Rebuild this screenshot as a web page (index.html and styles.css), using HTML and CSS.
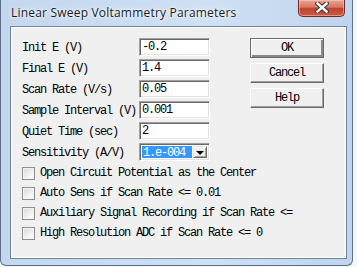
FILE: index.html
```html
<!DOCTYPE html>
<html lang="en">
<head>
  <meta charset="UTF-8">
  <title>Linear Sweep Voltammetry Parameters</title>
  <link rel="stylesheet" href="styles.css">
</head>
<body>
  <div class="window">
    <div class="titlebar">
      <span class="title">Linear Sweep Voltammetry Parameters</span>
      <button class="close" type="button">
        <svg width="14" height="11" viewBox="0 0 14 11">
          <path d="M2.5 1.5 L11.5 9.5 M11.5 1.5 L2.5 9.5" stroke="#3c3c3c" stroke-width="4.6" stroke-linecap="square"/>
          <path d="M2.5 1.5 L11.5 9.5 M11.5 1.5 L2.5 9.5" stroke="#fff" stroke-width="2.4" stroke-linecap="square"/>
        </svg>
      </button>
    </div>
    <div class="client">
      <div class="top">
        <div class="fields">
          <label>Init E (V)</label>
          <input class="edit" type="text" value="-0.2">
          <label>Final E (V)</label>
          <input class="edit" type="text" value="1.4">
          <label>Scan Rate (V/s)</label>
          <input class="edit" type="text" value="0.05">
          <label>Sample Interval (V)</label>
          <input class="edit" type="text" value="0.001">
          <label>Quiet Time (sec)</label>
          <input class="edit" type="text" value="2">
          <label>Sensitivity (A/V)</label>
          <div class="combo">
            <span class="combo-value">1.e-004</span>
            <span class="combo-btn"><span class="arrow"></span></span>
          </div>
        </div>
        <div class="buttons">
          <button class="btn default" type="button">OK</button>
          <button class="btn" type="button">Cancel</button>
          <button class="btn" type="button">Help</button>
        </div>
      </div>
      <div class="checks">
        <div class="check"><span class="box"></span>Open Circuit Potential as the Center</div>
        <div class="check"><span class="box"></span>Auto Sens if Scan Rate &lt;= 0.01</div>
        <div class="check"><span class="box"></span>Auxiliary Signal Recording if Scan Rate &lt;=</div>
        <div class="check"><span class="box"></span>High Resolution ADC if Scan Rate &lt;= 0</div>
      </div>
    </div>
  </div>
</body>
</html>
```

FILE: styles.css
```css
body {
  margin: 0;
  background: #f4f6f9;
  font-family: "Liberation Mono", monospace;
  font-size: 12px;
  letter-spacing: -1.2px;
  color: #000;
}
.window {
  box-sizing: border-box;
  width: 353px;
  height: 266px;
  padding: 0 5px 0 9px;
  border: 1px solid #5d6f86;
  border-top: none;
  border-radius: 0 0 6px 6px;
  background: linear-gradient(90deg, #c3d7ee, #cfe0f4 60%, #bfd5ee);
}
.titlebar {
  display: flex;
  height: 26px;
}
.title {
  padding-left: 1px;
  line-height: 26px;
  font-family: "Open Sans", sans-serif;
  font-size: 12px;
  letter-spacing: 0.2px;
  color: #1b1b1b;
  text-shadow: 0 0 6px #fff, 0 0 3px #fff;
}
.close {
  display: flex;
  align-items: center;
  justify-content: center;
  width: 47px;
  height: 17px;
  margin-left: auto;
  margin-right: 2px;
  padding: 0 0 1px 1px;
  border: 1px solid #6e2a20;
  border-top: none;
  border-radius: 0 0 5px 5px;
  background: linear-gradient(#e9a696, #d77662 45%, #c2422d 52%, #cb5a44);
  box-shadow: inset 0 0 0 1px rgba(255, 210, 200, 0.5);
}
.client {
  box-sizing: border-box;
  height: 233px;
  border: 1px solid #71839a;
  background: #f0f0f0;
  box-shadow: inset 1px 1px 0 #fff, inset -1px -1px 0 #fff;
  padding: 11px 0 0 11px;
}
.top {
  display: flex;
  gap: 40px;
}
.fields {
  display: grid;
  grid-template-columns: 117px 71px;
  grid-auto-rows: 18px;
  row-gap: 3px;
  align-items: center;
}
.fields label {
  white-space: nowrap;
  padding-top: 2px;
}
.edit {
  box-sizing: border-box;
  width: 71px;
  height: 18px;
  margin: 0;
  padding: 0 0 0 2px;
  border: 1px solid;
  border-color: #a0a0a0 #fff #fff #a0a0a0;
  box-shadow: inset 1px 1px 0 #696969, inset -1px -1px 0 #e3e3e3;
  background: #fff;
  font: inherit;
  letter-spacing: -1.2px;
  color: #000;
  outline: none;
}
.combo {
  box-sizing: border-box;
  display: flex;
  width: 71px;
  height: 18px;
  padding: 2px;
  border: 1px solid;
  border-color: #a0a0a0 #fff #fff #a0a0a0;
  box-shadow: inset 1px 1px 0 #696969, inset -1px -1px 0 #e3e3e3;
  background: #fff;
}
.combo-value {
  width: 51px;
  background: #3399ff;
  color: #fff;
  line-height: 14px;
  padding-left: 1px;
}
.combo-btn {
  box-sizing: border-box;
  display: flex;
  align-items: center;
  justify-content: center;
  width: 15px;
  margin-left: 1px;
  border: 1px solid;
  border-color: #e3e3e3 #696969 #696969 #e3e3e3;
  box-shadow: inset 1px 1px 0 #fff, inset -1px -1px 0 #a0a0a0;
  background: #f0f0f0;
}
.arrow {
  width: 0;
  height: 0;
  border-left: 4px solid transparent;
  border-right: 4px solid transparent;
  border-top: 4px solid #000;
  margin-top: 1px;
}
.buttons {
  display: flex;
  flex-direction: column;
  gap: 5px;
}
.btn {
  box-sizing: border-box;
  width: 74px;
  height: 20px;
  margin: 0;
  padding: 0;
  border: 1px solid;
  border-color: #fff #696969 #696969 #fff;
  box-shadow: inset -1px -1px 0 #a0a0a0;
  background: #f0f0f0;
  font: inherit;
  letter-spacing: -1.2px;
  color: #000;
}
.btn.default {
  border: 1px solid #6a6a6a;
  box-shadow: inset 1px 1px 0 #fff, inset -2px -2px 0 #888;
}
.checks {
  display: flex;
  flex-direction: column;
  margin-top: 2px;
}
.check {
  display: flex;
  align-items: center;
  gap: 5px;
  height: 20px;
  white-space: nowrap;
}
.box {
  box-sizing: border-box;
  width: 13px;
  height: 13px;
  border: 1px solid #8e8f8f;
  background: linear-gradient(135deg, #d8d8d8, #f6f6f6 70%, #fff);
  box-shadow: inset 0 0 0 1px #f2f2f2;
}
```
